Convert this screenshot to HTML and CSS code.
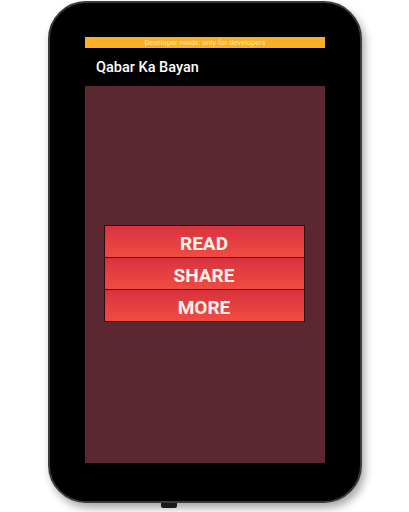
FILE: index.html
```html
<!DOCTYPE html>
<html>
<head>
<meta charset="utf-8">
<link rel="stylesheet" href="styles.css">
</head>
<body>
<div class="stage">
  <div class="device">
    <div class="screen">
      <div class="devbar">Developer mode: only for developers</div>
      <div class="appbar">Qabar Ka Bayan</div>
      <div class="content">
        <div class="menu">
          <div class="btn">READ</div>
          <div class="btn">SHARE</div>
          <div class="btn">MORE</div>
        </div>
      </div>
    </div>
    <div class="tab"></div>
  </div>
</div>
</body>
</html>
```
FILE: styles.css
```css
html, body {
  margin: 0;
  padding: 0;
  background: #ffffff;
  font-family: Roboto, "Liberation Sans", sans-serif;
}
.stage {
  width: 409px;
  height: 512px;
  padding-top: 1px;
  padding-left: 48px;
  box-sizing: border-box;
}
.device {
  position: relative;
  width: 314px;
  height: 502px;
  box-sizing: border-box;
  background: #000;
  border: 2px solid #3a3a3a;
  border-radius: 38px;
  box-shadow: 3px 5px 8px rgba(0,0,0,0.35);
  padding: 34px 0 0 35px;
}
.screen {
  width: 240px;
  display: flex;
  flex-direction: column;
}
.devbar {
  height: 11px;
  background: #f9b024;
  color: #fde6b4;
  font-size: 7.5px;
  line-height: 11px;
  text-align: center;
}
.appbar {
  height: 38px;
  color: #fff;
  font-size: 14.5px;
  font-weight: 500;
  line-height: 40px;
  padding-left: 11px;
  box-sizing: border-box;
}
.content {
  height: 377px;
  background: #5b2832;
  display: flex;
  align-items: center;
  justify-content: center;
}
.menu {
  width: 201px;
  display: flex;
  flex-direction: column;
  margin-left: -2px;
  margin-top: -2px;
}
.btn {
  height: 31px;
  border: 1px solid #2a0c10;
  border-bottom: none;
  background: linear-gradient(#d7333f, #f24b43);
  color: #fff3ea;
  font-size: 19px;
  font-weight: 700;
  text-align: center;
  line-height: 35px;
  overflow: hidden;
}
.btn:last-child {
  border-bottom: 1px solid #2a0c10;
}
.tab {
  position: absolute;
  left: 111px;
  bottom: -7px;
  width: 16px;
  height: 5px;
  background: #1a1a1a;
  border-radius: 0 0 2px 2px;
}
```
